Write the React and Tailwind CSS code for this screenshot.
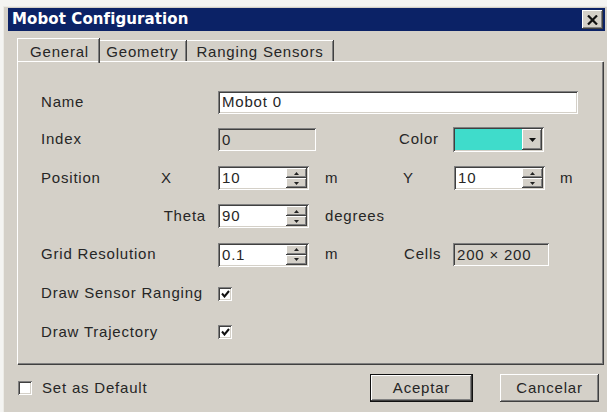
import React from 'react'

const SUNKEN =
  'shadow-[inset_1px_1px_0_#808080,inset_-1px_-1px_0_#ffffff,inset_2px_2px_0_#404040,inset_-2px_-2px_0_#d4d0c8]'
const RAISED =
  'shadow-[inset_-1px_-1px_0_#404040,inset_1px_1px_0_#ffffff,inset_-2px_-2px_0_#808080,inset_2px_2px_0_#d4d0c8]'

function Field({ value, width, readOnly }) {
  return (
    <div
      className={`flex h-[23px] items-center pl-[4px] pt-[1px] ${SUNKEN} ${
        readOnly ? 'bg-[#d4d0c8]' : 'bg-white'
      }`}
      style={{ width }}
    >
      {value}
    </div>
  )
}

function Spin({ value }) {
  return (
    <div className={`flex h-[24px] w-[91px] items-stretch bg-white p-[2px] ${SUNKEN}`}>
      <div className="flex flex-1 items-center pl-[2px] pt-[1px]">{value}</div>
      <div className="flex w-[21px] flex-col">
        <div className={`flex flex-1 items-center justify-center bg-[#d4d0c8] ${RAISED}`}>
          <svg width="5" height="3" viewBox="0 0 5 3">
            <path d="M2.5 0 L5 3 L0 3 Z" fill="#222" />
          </svg>
        </div>
        <div className={`flex flex-1 items-center justify-center bg-[#d4d0c8] ${RAISED}`}>
          <svg width="5" height="3" viewBox="0 0 5 3">
            <path d="M0 0 L5 0 L2.5 3 Z" fill="#222" />
          </svg>
        </div>
      </div>
    </div>
  )
}

function Check({ checked }) {
  return (
    <div className={`flex h-[14px] w-[14px] items-center justify-center bg-white ${SUNKEN}`}>
      {checked && (
        <svg width="9" height="8" viewBox="0 0 9 8">
          <path d="M1 3.5 L3.5 6.5 L8 1" stroke="#111" strokeWidth="2" fill="none" />
        </svg>
      )}
    </div>
  )
}

function Row({ height, children }) {
  return (
    <div className="flex items-center" style={{ height }}>
      {children}
    </div>
  )
}

export default function App() {
  return (
    <div
      className="h-[412px] w-[607px] bg-[#f4f4f2] pl-[3px] pt-[6px] text-[15px] tracking-[0.8px] text-[#262626]"
      style={{ fontFamily: '"Liberation Sans", Arial, sans-serif' }}
    >
      <div className="flex h-full flex-col border-l border-t border-[#ecebe6] bg-[#d4d0c8] pl-[4px] pr-[2px] pt-[1px]">
        {/* caption */}
        <div className="flex h-[23px] items-center justify-between bg-[#0b2266] pl-[4px] pr-[2px]">
          <span
            className="text-[15px] font-bold tracking-[0.1px] text-white"
            style={{ fontFamily: '"DejaVu Sans", Verdana, sans-serif' }}
          >
            Mobot Configuration
          </span>
          <div className={`flex h-[19px] w-[21px] items-center justify-center bg-[#d4d0c8] ${RAISED}`}>
            <svg width="11" height="10" viewBox="0 0 11 10">
              <path d="M1 0.5 L10 9.5 M10 0.5 L1 9.5" stroke="#111" strokeWidth="2.2" />
            </svg>
          </div>
        </div>

        {/* tabs */}
        <div className="ml-[9px] mt-[6px] flex h-[24px] items-end">
          <div className="relative z-10 -mb-[2px] flex h-[25px] w-[82px] items-start justify-center border-l border-t border-white pl-[2px] pt-[2px] shadow-[inset_-1px_0_0_#808080,1px_0_0_#404040]">
            General
          </div>
          <div className="flex h-[21px] w-[87px] items-start justify-center border-t border-white shadow-[inset_-1px_0_0_#808080,1px_0_0_#404040]">
            Geometry
          </div>
          <div className="ml-[1px] flex h-[21px] w-[146px] items-start justify-center border-t border-white shadow-[inset_-1px_0_0_#808080,1px_0_0_#404040]">
            Ranging Sensors
          </div>
        </div>

        {/* page */}
        <div className="ml-[9px] mr-[2px] flex h-[303px] flex-col border-l border-t border-white pl-[23px] pt-[22px] shadow-[inset_-1px_-1px_0_#808080,1px_1px_0_#404040]">
          <Row height={36}>
            <span className="w-[177px]">Name</span>
            <Field value="Mobot 0" width={360} />
          </Row>
          <Row height={39}>
            <span className="w-[177px]">Index</span>
            <Field value="0" width={98} readOnly />
            <span className="ml-[83px] w-[54px]">Color</span>
            <div className={`flex h-[25px] w-[91px] items-stretch bg-white p-[2px] ${SUNKEN}`}>
              <div className="flex-1 bg-[#3fdccb]" />
              <div className={`flex w-[20px] items-center justify-center bg-[#d4d0c8] ${RAISED}`}>
                <svg width="7" height="4" viewBox="0 0 7 4">
                  <path d="M0 0 L7 0 L3.5 4 Z" fill="#111" />
                </svg>
              </div>
            </div>
          </Row>
          <Row height={38}>
            <span className="w-[120px]">Position</span>
            <span className="w-[57px]">X</span>
            <Spin value="10" />
            <span className="ml-[16px] w-[78px]">m</span>
            <span className="w-[51px]">Y</span>
            <Spin value="10" />
            <span className="ml-[15px]">m</span>
          </Row>
          <Row height={38}>
            <span className="w-[177px] pr-[12px] text-right">Theta</span>
            <Spin value="90" />
            <span className="ml-[16px]">degrees</span>
          </Row>
          <Row height={39}>
            <span className="w-[177px]">Grid Resolution</span>
            <Spin value="0.1" />
            <span className="ml-[16px] w-[79px]">m</span>
            <span className="w-[49px]">Cells</span>
            <Field value="200 × 200" width={96} readOnly />
          </Row>
          <Row height={39}>
            <span className="w-[177px]">Draw Sensor Ranging</span>
            <Check checked />
          </Row>
          <Row height={38}>
            <span className="w-[177px]">Draw Trajectory</span>
            <Check checked />
          </Row>
        </div>

        {/* footer */}
        <div className="mt-[10px] flex items-center pl-[10px] pr-[6px]">
          <Check />
          <span className="ml-[10px]">Set as Default</span>
          <button className="ml-auto flex h-[28px] w-[103px] items-center justify-center border border-[#111] bg-[#d4d0c8] shadow-[inset_-1px_-1px_0_#404040,inset_1px_1px_0_#ffffff,inset_-2px_-2px_0_#808080]">
            Aceptar
          </button>
          <button className={`ml-[27px] flex h-[28px] w-[99px] items-center justify-center bg-[#d4d0c8] ${RAISED}`}>
            Cancelar
          </button>
        </div>
      </div>
    </div>
  )
}
